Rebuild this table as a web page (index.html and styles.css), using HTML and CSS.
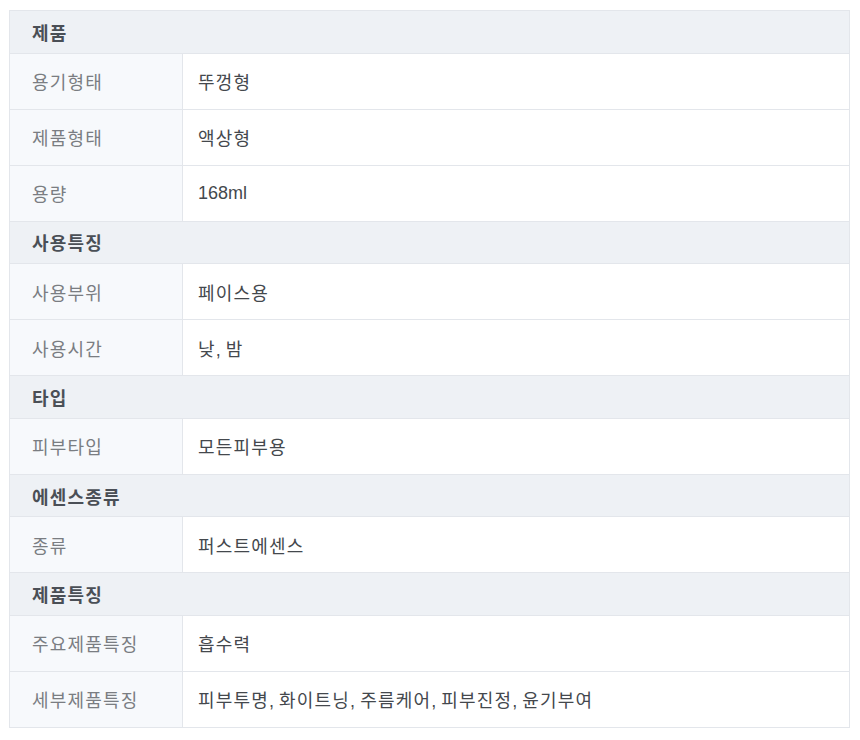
FILE: index.html
```html
<!DOCTYPE html>
<html lang="ko">
<head>
<meta charset="utf-8">
<link rel="stylesheet" href="styles.css">
</head>
<body>
<div class="wrap">
  <div class="spec">
    <div class="sec">제품</div>
    <div class="row"><div class="k">용기형태</div><div class="v">뚜껑형</div></div>
    <div class="row"><div class="k">제품형태</div><div class="v">액상형</div></div>
    <div class="row"><div class="k">용량</div><div class="v"><span class="latin">168ml</span></div></div>
    <div class="sec">사용특징</div>
    <div class="row"><div class="k">사용부위</div><div class="v">페이스용</div></div>
    <div class="row"><div class="k">사용시간</div><div class="v">낮<span class="latin">, </span>밤</div></div>
    <div class="sec">타입</div>
    <div class="row"><div class="k">피부타입</div><div class="v">모든피부용</div></div>
    <div class="sec">에센스종류</div>
    <div class="row"><div class="k">종류</div><div class="v">퍼스트에센스</div></div>
    <div class="sec">제품특징</div>
    <div class="row"><div class="k">주요제품특징</div><div class="v">흡수력</div></div>
    <div class="row"><div class="k">세부제품특징</div><div class="v">피부투명<span class="latin">, </span>화이트닝<span class="latin">, </span>주름케어<span class="latin">, </span>피부진정<span class="latin">, </span>윤기부여</div></div>
  </div>
</div>
</body>
</html>
```

FILE: styles.css
```css
html, body {
  margin: 0;
  padding: 0;
  background: #ffffff;
}
body {
  font-family: "Liberation Sans", "Noto Sans CJK KR", sans-serif;
  font-size: 18px;
  letter-spacing: 1.2px;
}
.wrap {
  padding: 10px 10px 0 9px;
}
.spec {
  border: 1px solid #e3e6eb;
  border-bottom: none;
}
.sec {
  box-sizing: border-box;
  height: 42.6px;
  display: flex;
  align-items: center;
  padding-left: 22px;
  background: #eef1f5;
  border-bottom: 1px solid #e3e6eb;
  color: #4a4f56;
  font-weight: bold;
}
.row {
  box-sizing: border-box;
  height: 56px;
  display: flex;
  border-bottom: 1px solid #e3e6eb;
}
.k {
  box-sizing: border-box;
  width: 173px;
  flex: none;
  display: flex;
  align-items: center;
  padding-left: 22px;
  background: #f7f9fc;
  border-right: 1px solid #e3e6eb;
  color: #7a7d82;
}
.v {
  flex: 1;
  display: block;
  align-self: center;
  padding-left: 15px;
  color: #44484d;
  white-space: pre;
}
.latin {
  letter-spacing: 0;
}
```
